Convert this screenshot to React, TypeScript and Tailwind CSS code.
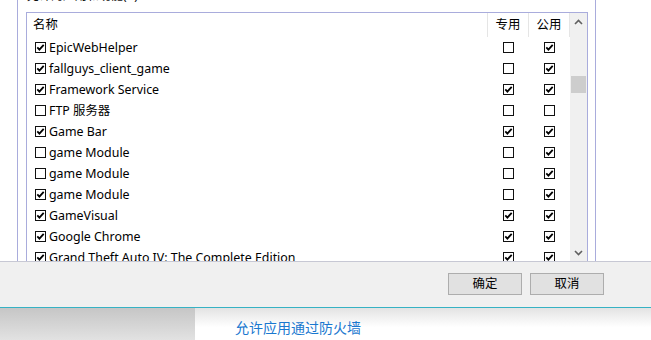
import React from "react";

// --- Types ---
interface AppRow {
  name: string;
  on: boolean;
  priv: boolean;
  pub: boolean;
}

const rows: AppRow[] = [
  { name: "EpicWebHelper", on: true, priv: false, pub: true },
  { name: "fallguys_client_game", on: true, priv: false, pub: true },
  { name: "Framework Service", on: true, priv: true, pub: true },
  { name: "FTP 服务器", on: false, priv: false, pub: false },
  { name: "Game Bar", on: true, priv: true, pub: true },
  { name: "game Module", on: false, priv: false, pub: true },
  { name: "game Module", on: false, priv: false, pub: true },
  { name: "game Module", on: true, priv: false, pub: true },
  { name: "GameVisual", on: true, priv: true, pub: true },
  { name: "Google Chrome", on: true, priv: true, pub: true },
  { name: "Grand Theft Auto IV: The Complete Edition", on: true, priv: true, pub: true },
];

function Box({ checked }: { checked: boolean }) {
  return (
    <svg width="11" height="11" viewBox="0 0 11 11" className="shrink-0 block">
      <rect x="0.5" y="0.5" width="10" height="10" fill="#fff" stroke="#111" />
      {checked && (
        <path d="M2.3 5.4 L4.4 7.6 L8.7 2.8" fill="none" stroke="#000" strokeWidth="1.8" />
      )}
    </svg>
  );
}

function Chevron({ up }: { up: boolean }) {
  return (
    <svg width="9" height="6" viewBox="0 0 9 6" className="block">
      <path
        d={up ? "M1 5 L4.5 1.5 L8 5" : "M1 1 L4.5 4.5 L8 1"}
        fill="none"
        stroke="#606060"
        strokeWidth="1.6"
      />
    </svg>
  );
}

export default function App() {
  const font = { fontFamily: '"Noto Sans", "Noto Sans CJK SC", sans-serif' };

  return (
    <div className="w-[651px] h-[340px] overflow-hidden bg-white flex flex-col text-black" style={font}>
      {/* dialog body */}
      <div className="h-[261px] overflow-hidden flex">
        <div className="ml-[17px] w-[579px] h-full border-x border-[#a9acdc] pl-[8px] pr-[7px] flex flex-col">
          {/* clipped group label */}
          <div className="h-[12px] overflow-hidden shrink-0">
            <div className="-mt-[12px] pl-[1px] text-[12px] leading-[16px] text-[#111]">允许的应用和功能(A):</div>
          </div>

          {/* list box */}
          <div className="flex-1 border-x border-t border-[#a9acdc] flex overflow-hidden">
            <div className="flex-1 flex flex-col">
              <div className="h-[24px] shrink-0 flex text-[12.4px]">
                <div className="flex-1 border-r border-[#e5e5e5] pl-[6px] flex items-center">名称</div>
                <div className="w-[41px] border-r border-[#e5e5e5] flex items-center justify-center">专用</div>
                <div className="w-[41px] border-r border-[#e5e5e5] flex items-center justify-center">公用</div>
              </div>
              {rows.map((r, i) => (
                <div key={i} className="h-[21px] shrink-0 flex items-center text-[12.4px]">
                  <div className="flex-1 flex items-center pl-[8px] gap-[3px] whitespace-nowrap">
                    <Box checked={r.on} />
                    <span className="leading-[21px]">{r.name}</span>
                  </div>
                  <div className="w-[41px] flex justify-center">
                    <Box checked={r.priv} />
                  </div>
                  <div className="w-[41px] flex justify-center">
                    <Box checked={r.pub} />
                  </div>
                </div>
              ))}
            </div>

            {/* scrollbar */}
            <div className="w-[17px] bg-[#f0f0f0] flex flex-col">
              <div className="h-[17px] flex items-center justify-center">
                <Chevron up />
              </div>
              <div className="flex-1 px-[1px]">
                <div className="mt-[46px] h-[17px] bg-[#cdcdcd]" />
              </div>
              <div className="h-[17px] flex items-center justify-center">
                <Chevron up={false} />
              </div>
            </div>
          </div>
        </div>
      </div>

      {/* button bar */}
      <div className="h-[47px] shrink-0 border-t border-[#c7c8d4] border-b border-b-[#36b2c4] bg-[#f0f0f0] flex justify-end items-start pt-[11px] pr-[47px] gap-[8px]">
        <button className="w-[74px] h-[22px] bg-[#e1e1e1] border border-[#adadad] text-[12.4px] leading-none">确定</button>
        <button className="w-[74px] h-[22px] bg-[#e1e1e1] border border-[#adadad] text-[12.4px] leading-none">取消</button>
      </div>

      {/* behind the dialog */}
      <div className="flex-1 flex">
        <div className="w-[195px] bg-linear-to-b from-[#c6c6c6] to-[#e2e2e2]" />
        <div className="flex-1 bg-linear-to-b from-[#e3e3e3] to-white to-60% pl-[40px] flex items-end pb-[2px]">
          <span className="text-[14px] leading-[20px] text-[#1a78cf]">允许应用通过防火墙</span>
        </div>
      </div>
    </div>
  );
}
